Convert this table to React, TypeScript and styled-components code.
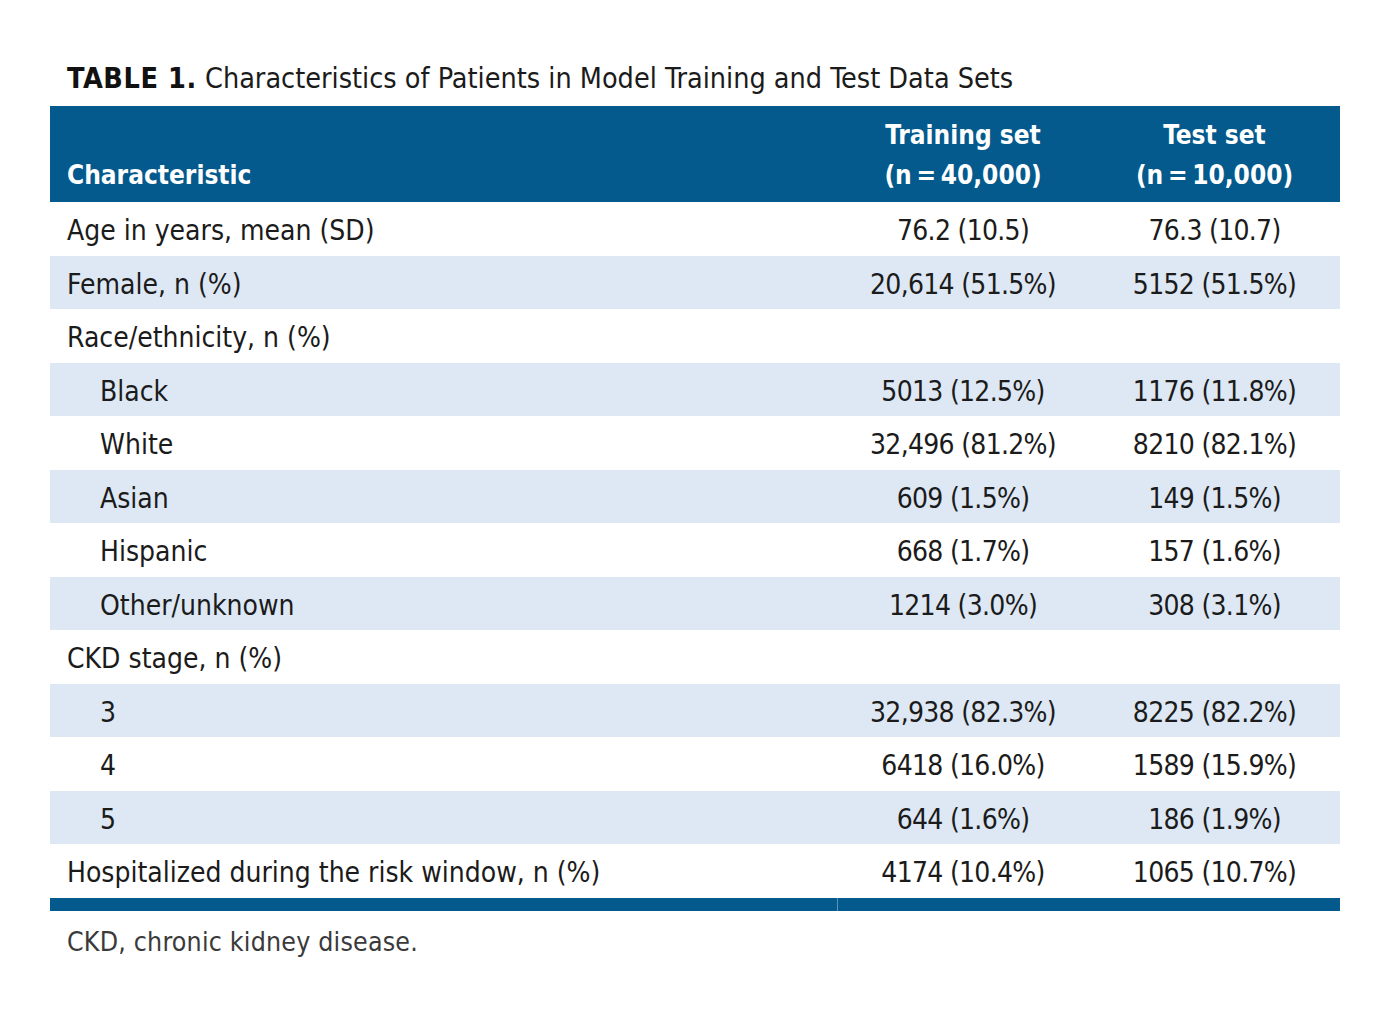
import React from "react";
import styled, { createGlobalStyle } from "styled-components";

const GlobalStyle = createGlobalStyle`
  body {
    margin: 0;
    background: #fff;
    font-family: "DejaVu Sans Condensed", "DejaVu Sans", sans-serif;
    color: #1b1b1b;
  }
`;

const Page = styled.div`
  padding: 62px 50px 40px;
  width: 1290px;
`;

const Title = styled.div`
  font-size: 28.5px;
  line-height: 34px;
  padding-left: 17px;
  margin-bottom: 10px;
  color: #1b1b1b;

  b {
    font-weight: 700;
    letter-spacing: 0.6px;
    color: #111;
  }
`;

const Table = styled.table`
  width: 1290px;
  border-collapse: collapse;
  table-layout: fixed;
`;

const HeadRow = styled.tr`
  background: #045a8d;
  height: 96px;
`;

const HeadCell = styled.th<{ $align?: "left" | "center" }>`
  text-align: ${(p) => p.$align ?? "center"};
  vertical-align: bottom;
  padding: 0 0 7px ${(p) => (p.$align === "left" ? "17px" : "0")};
  color: #fff;
  font-size: 26px;
  line-height: 40px;
  font-weight: 700;
`;

const Row = styled.tr<{ $shaded: boolean }>`
  height: 53.5px;
  background: ${(p) => (p.$shaded ? "#dde8f4" : "#fff")};
`;

const LabelCell = styled.td<{ $indent: boolean }>`
  padding: 4px 0 0 ${(p) => (p.$indent ? "50px" : "17px")};
  font-size: 28px;
  white-space: nowrap;
`;

const ValueCell = styled.td`
  padding: 4px 0 0;
  text-align: center;
  font-size: 28px;
  letter-spacing: -0.7px;
  white-space: nowrap;
`;

const FootRow = styled.tr`
  height: 13px;
`;

const FootBar = styled.td<{ $split?: boolean }>`
  padding: 0;
  background: #045a8d;
  border-right: ${(p) => (p.$split ? "1px solid #5d92bb" : "none")};
`;

const Note = styled.div`
  padding-left: 17px;
  margin-top: 15px;
  font-size: 26.5px;
  letter-spacing: 0.2px;
  color: #3a3a3a;
`;

type Item = { label: string; indent?: boolean; train?: string; test?: string };

const rows: Item[] = [
  { label: "Age in years, mean (SD)", train: "76.2 (10.5)", test: "76.3 (10.7)" },
  { label: "Female, n (%)", train: "20,614 (51.5%)", test: "5152 (51.5%)" },
  { label: "Race/ethnicity, n (%)" },
  { label: "Black", indent: true, train: "5013 (12.5%)", test: "1176 (11.8%)" },
  { label: "White", indent: true, train: "32,496 (81.2%)", test: "8210 (82.1%)" },
  { label: "Asian", indent: true, train: "609 (1.5%)", test: "149 (1.5%)" },
  { label: "Hispanic", indent: true, train: "668 (1.7%)", test: "157 (1.6%)" },
  { label: "Other/unknown", indent: true, train: "1214 (3.0%)", test: "308 (3.1%)" },
  { label: "CKD stage, n (%)" },
  { label: "3", indent: true, train: "32,938 (82.3%)", test: "8225 (82.2%)" },
  { label: "4", indent: true, train: "6418 (16.0%)", test: "1589 (15.9%)" },
  { label: "5", indent: true, train: "644 (1.6%)", test: "186 (1.9%)" },
  { label: "Hospitalized during the risk window, n (%)", train: "4174 (10.4%)", test: "1065 (10.7%)" },
];

export default function App() {
  return (
    <Page>
      <GlobalStyle />
      <Title>
        <b>TABLE 1.</b> Characteristics of Patients in Model Training and Test Data Sets
      </Title>
      <Table>
        <colgroup>
          <col style={{ width: 787 }} />
          <col style={{ width: 252 }} />
          <col style={{ width: 251 }} />
        </colgroup>
        <thead>
          <HeadRow>
            <HeadCell $align="left">Characteristic</HeadCell>
            <HeadCell>
              Training set
              <br />
              (n&#8201;=&#8201;40,000)
            </HeadCell>
            <HeadCell>
              Test set
              <br />
              (n&#8201;=&#8201;10,000)
            </HeadCell>
          </HeadRow>
        </thead>
        <tbody>
          {rows.map((r, i) => (
            <Row key={r.label} $shaded={i % 2 === 1}>
              <LabelCell $indent={!!r.indent}>{r.label}</LabelCell>
              <ValueCell>{r.train ?? ""}</ValueCell>
              <ValueCell>{r.test ?? ""}</ValueCell>
            </Row>
          ))}
        </tbody>
        <tfoot>
          <FootRow>
            <FootBar $split />
            <FootBar />
            <FootBar />
          </FootRow>
        </tfoot>
      </Table>
      <Note>CKD, chronic kidney disease.</Note>
    </Page>
  );
}
